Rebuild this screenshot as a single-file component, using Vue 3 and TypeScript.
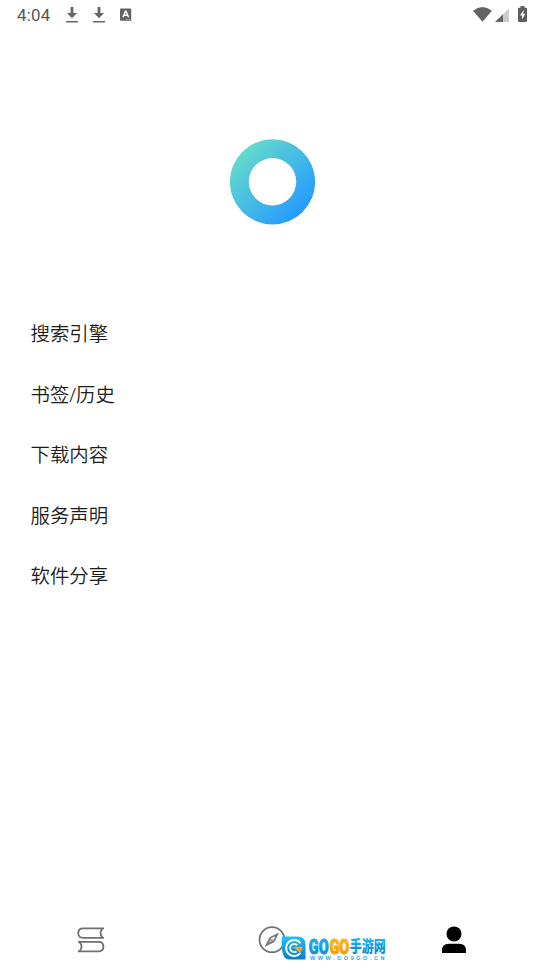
<script setup lang="ts">
const menu: string[] = ['搜索引擎', '书签/历史', '下载内容', '服务声明', '软件分享']
const downloads: number[] = [1, 2]
</script>

<template>
  <div class="screen">
    <header class="status">
      <span class="time">4:04</span>
      <svg v-for="d in downloads" :key="d" class="download" width="12" height="16" viewBox="0 0 12 16">
        <path d="M4.6 0H7.4V6H11L6 11.2L1 6H4.6ZM0 14H12V15.5H0Z" fill="#666" />
      </svg>
      <svg class="badge" width="12" height="13" viewBox="0 0 12 13">
        <rect x="0" y=".6" width="11.2" height="12.2" rx="1" fill="#626262" />
        <path d="M3 9.2L5.5 3.2H6L8.6 9.2M4 7.3H7.8" fill="none" stroke="#fff" stroke-width="1.5" />
        <path d="M6 11.3H10.2" stroke="#ccc" stroke-width=".8" stroke-dasharray="1 .5" />
      </svg>
      <div class="system">
        <svg width="20" height="16" viewBox="0 0 20 16">
          <path d="M0 3.8Q9.4 -3.6 19 3.8L9.5 14.8Z" fill="#636363" />
        </svg>
        <svg class="signal" width="14" height="15" viewBox="0 0 14 15">
          <path d="M0 14L14 .5V14Z" fill="#ccc" />
          <path d="M0 14L8 6.3V14Z" fill="#636363" />
        </svg>
        <svg class="battery" width="10" height="17" viewBox="0 0 10 17">
          <path d="M2.5 0H6.5V1.8H8Q9 1.8 9 2.8V15Q9 16 8 16H1Q0 16 0 15V2.8Q0 1.8 1 1.8H2.5Z" fill="#5f5f5f" />
          <path d="M5.5 4L2 9.4H4.1V13.5L7.2 8H5.5Z" fill="#fff" />
        </svg>
      </div>
    </header>

    <div class="hero">
      <svg width="85" height="86" viewBox=".5 0 85 86">
        <defs>
          <linearGradient id="ring" x1="0" y1="0" x2="1" y2="1">
            <stop offset=".12" stop-color="#67dccb" />
            <stop offset=".88" stop-color="#2299ff" />
          </linearGradient>
        </defs>
        <path fill="url(#ring)" fill-rule="evenodd" d="M43 .2A42.6 42.6 0 1 1 43 85.4A42.6 42.6 0 1 1 43 .2ZM43 19.1A23.7 23.7 0 1 0 43 66.5A23.7 23.7 0 1 0 43 19.1Z" />
      </svg>
    </div>

    <ul class="menu">
      <li v-for="item in menu" :key="item">{{ item }}</li>
    </ul>

    <nav class="tabs">
      <div class="tab">
        <svg width="28" height="26" viewBox="0 0 28 26" fill="none" stroke="#707070" stroke-width="1.8">
          <path d="M27 1.3H6.2Q1.2 1.3 1.2 6.1T6.2 10.9H27M25.6 1.3Q21.4 6.1 25.6 10.9M1 14.9H21.8Q26.4 14.9 26.4 19.6T21.8 24.4H1M2.4 14.9Q6.6 19.6 2.4 24.4" />
        </svg>
      </div>
      <div class="tab">
        <svg width="28" height="28" viewBox="0 0 28 28" fill="none" stroke="#747474" stroke-width="1.8">
          <circle cx="14" cy="13.7" r="12.5" />
          <path d="M19.4 8.2L15.9 15.3L8.4 19.2L12.1 11.9Z" stroke-width="1.6" />
          <path d="M9 18.6L12.3 12.2L15.6 15.2Z" fill="#747474" stroke="none" opacity=".55" />
          <circle cx="14" cy="13.7" r=".8" fill="#747474" stroke="none" />
        </svg>
      </div>
      <div class="tab">
        <svg width="26" height="28" viewBox="0 0 26 28">
          <circle cx="13" cy="7.9" r="7.5" />
          <path d="M1 27V24.5Q1 17.7 7.8 17.7H18.2Q25 17.7 25 24.5V27Z" />
        </svg>
      </div>
    </nav>

    <svg class="watermark" width="112" height="34" viewBox="0 -4 112 34">
      <defs>
        <linearGradient id="blue" x1="0" y1="0" x2="0" y2="1">
          <stop offset="0" stop-color="#20c4f7" />
          <stop offset="1" stop-color="#087bca" />
        </linearGradient>
        <linearGradient id="orange" x1="0" y1="0" x2="0" y2="1">
          <stop offset="0" stop-color="#ffcb00" />
          <stop offset="1" stop-color="#ff8700" />
        </linearGradient>
      </defs>
      <path d="M1.8 2.5H17.5Q25.5 2.5 25.5 10.5V25.5H10Q5 25.5 3.5 21.5Q1.8 18 1.8 12Z" fill="url(#blue)" />
      <path d="M20.5 9.2A8 8 0 1 0 20.5 18.8" fill="none" stroke="#fff" stroke-width="2" />
      <path d="M17.2 11.2A4.1 4.1 0 1 0 16.5 17.4" fill="none" stroke="#fff" stroke-width="1.8" />
      <path d="M12.5 12.7H22.8Q22.6 16 19.8 18.8L16.5 15.7Z" fill="#ffa226" />
      <text class="brand" x="28.8" y="19.5" textLength="19.8" lengthAdjust="spacingAndGlyphs" fill="url(#blue)" stroke="#12a0e5">GO</text>
      <text class="brand" x="49.4" y="19.5" textLength="19.8" lengthAdjust="spacingAndGlyphs" fill="url(#orange)" stroke="#ffa600">GO</text>
      <text class="brand-cn" x="69.8" y="18" textLength="36" lengthAdjust="spacingAndGlyphs" fill="url(#blue)">手游网</text>
      <text class="domain" x="30" y="25.9" textLength="74.5">WWW.GO9GO.CN</text>
    </svg>
  </div>
</template>

<style>
body {
  margin: 0;
  background: #fff;
}
</style>

<style scoped>
.screen {
  position: relative;
  display: flex;
  flex-direction: column;
  width: 545px;
  height: 970px;
  background: #fff;
  overflow: hidden;
  font-family: "Noto Sans", "Noto Sans CJK SC", sans-serif;
}
svg {
  display: block;
  flex: none;
}
.status {
  display: flex;
  align-items: flex-start;
  height: 30px;
  padding: 7px 17px 0;
  box-sizing: border-box;
}
.time {
  width: 49px;
  font: 400 16.8px/17px Roboto, sans-serif;
  letter-spacing: 0.25px;
  color: #555;
}
.download {
  margin-right: 15px;
}
.badge {
  margin-top: 1px;
}
.system {
  display: flex;
  margin-left: auto;
}
.signal {
  margin: 1px 9px 0 2px;
}
.battery {
  margin-top: -1px;
}
.hero {
  display: flex;
  justify-content: center;
  height: 165px;
  padding-top: 109px;
}
.menu {
  list-style: none;
  margin: 0;
  padding: 0 30.5px;
}
.menu li {
  height: 60.6px;
  font-size: 19.4px;
  font-weight: 350;
  line-height: 60.6px;
  color: #1c1c1c;
}
.tabs {
  display: grid;
  grid-template-columns: repeat(3, 1fr);
  align-items: center;
  height: 61px;
  margin-top: auto;
}
.tab {
  display: flex;
  justify-content: center;
}
.watermark {
  position: absolute;
  left: 280px;
  top: 930px;
}
.brand {
  font: 900 20.5px Roboto, sans-serif;
  stroke-width: 0.9px;
}
.brand-cn {
  font: 900 15.5px "Noto Sans CJK SC", sans-serif;
}
.domain {
  font: 700 5.5px "Liberation Sans", sans-serif;
  fill: #2ba6e4;
}
</style>
